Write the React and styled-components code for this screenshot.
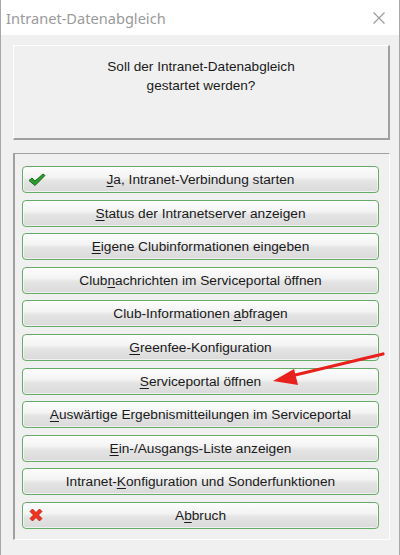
import React from "react";
import styled, { createGlobalStyle } from "styled-components";

const GlobalStyle = createGlobalStyle`
  html, body {
    margin: 0;
    padding: 0;
    background: #f0f0f0;
  }
`;

const Window = styled.div`
  position: relative;
  width: 400px;
  height: 555px;
  box-sizing: border-box;
  border-left: 1px solid #a8a8a8;
  border-right: 1px solid #a8a8a8;
  background: #f0f0f0;
  display: flex;
  flex-direction: column;
  overflow: hidden;
`;

const TitleBar = styled.div`
  height: 35px;
  flex: none;
  background: #ffffff;
  display: flex;
  align-items: center;
  justify-content: space-between;
  padding: 0 14px 0 5px;
  font-family: "Noto Sans", "Open Sans", sans-serif;
  font-size: 14.6px;
  color: #9a9a9a;
`;

const Body = styled.div`
  flex: 1;
  display: flex;
  flex-direction: column;
  gap: 13px;
  padding: 10px 9px 0 12px;
`;

const MessagePanel = styled.div`
  height: 95px;
  box-sizing: border-box;
  border-top: 1px solid #ffffff;
  border-left: 1px solid #ffffff;
  border-right: 2px solid #a0a0a0;
  border-bottom: 2px solid #a0a0a0;
  padding-top: 11px;
  text-align: center;
  font-family: "Liberation Sans", Arial, sans-serif;
  font-size: 13.6px;
  line-height: 19px;
  color: #1a1a1a;
`;

const GroupBox = styled.div`
  height: 387px;
  box-sizing: border-box;
  border-top: 1px solid #a0a0a0;
  border-left: 2px solid #a0a0a0;
  border-right: 1px solid #ffffff;
  border-bottom: 1px solid #ffffff;
  padding: 12px 10px 0 7px;
  display: flex;
  flex-direction: column;
  gap: 6.6px;
`;

const Button = styled.div`
  position: relative;
  height: 27px;
  box-sizing: border-box;
  border: 1px solid #66ab66;
  border-radius: 4px;
  background: linear-gradient(#fdfdfd 0%, #f3f3f3 42%, #e4e4e4 55%, #dadada 100%);
  box-shadow: inset 0 0 0 1px rgba(255, 255, 255, 0.6);
  display: flex;
  align-items: center;
  justify-content: center;
  font-family: "Liberation Sans", Arial, sans-serif;
  font-size: 13.7px;
  color: #1a1a1a;
`;

const Label = styled.span`
  white-space: pre;
`;

const Key = styled.span`
  text-decoration: underline;
  text-underline-offset: 2px;
`;

const IconSlot = styled.span`
  position: absolute;
  left: 5px;
  top: 50%;
  transform: translateY(-50%);
  display: flex;
`;

const ArrowLayer = styled.svg`
  position: absolute;
  left: 0;
  top: 0;
  pointer-events: none;
`;

const CheckIcon = () => (
  <svg width="18" height="14" viewBox="0 0 18 14">
    <path
      d="M1 7.5 L4 5 L7 8 L15 1 L17 2.5 L7 12.5 Z"
      fill="#2f9a2f"
      stroke="#1c6a1c"
      strokeWidth="1"
      strokeLinejoin="round"
    />
  </svg>
);

const CrossIcon = () => (
  <svg width="16" height="16" viewBox="0 0 16 16">
    <path
      d="M2 4.5 L4.5 2 L8 5.5 L11.5 2 L14 4.5 L10.5 8 L14 11.5 L11.5 14 L8 10.5 L4.5 14 L2 11.5 L5.5 8 Z"
      fill="#f0321e"
      stroke="#b8200f"
      strokeWidth="0.8"
      strokeLinejoin="round"
    />
  </svg>
);

const buttons = [
  { pre: "", key: "J", post: "a, Intranet-Verbindung starten", icon: "check" },
  { pre: "", key: "S", post: "tatus der Intranetserver anzeigen" },
  { pre: "", key: "E", post: "igene Clubinformationen eingeben" },
  { pre: "Club", key: "n", post: "achrichten im Serviceportal öffnen" },
  { pre: "Club-Informationen ", key: "a", post: "bfragen" },
  { pre: "", key: "G", post: "reenfee-Konfiguration" },
  { pre: "", key: "S", post: "erviceportal öffnen" },
  { pre: "", key: "A", post: "uswärtige Ergebnismitteilungen im Serviceportal" },
  { pre: "", key: "E", post: "in-/Ausgangs-Liste anzeigen" },
  { pre: "Intranet-", key: "K", post: "onfiguration und Sonderfunktionen" },
  { pre: "A", key: "b", post: "bruch", icon: "cross" },
];

const App = () => {
  return (
    <>
      <GlobalStyle />
      <Window>
        <TitleBar>
          <span>Intranet-Datenabgleich</span>
          <svg width="12" height="12" viewBox="0 0 12 12">
            <path d="M0.5 0.5 L11.5 11.5 M11.5 0.5 L0.5 11.5" stroke="#9a9a9a" strokeWidth="1.1" />
          </svg>
        </TitleBar>
        <Body>
          <MessagePanel>
            Soll der Intranet-Datenabgleich
            <br />
            gestartet werden?
          </MessagePanel>
          <GroupBox>
            {buttons.map((b, i) => (
              <Button key={i}>
                {b.icon && (
                  <IconSlot>{b.icon === "check" ? <CheckIcon /> : <CrossIcon />}</IconSlot>
                )}
                <Label>
                  {b.pre}
                  <Key>{b.key}</Key>
                  {b.post}
                </Label>
              </Button>
            ))}
          </GroupBox>
        </Body>
        <ArrowLayer width="400" height="555">
          <line x1="382" y1="354" x2="290" y2="376" stroke="#e8211c" strokeWidth="3.2" strokeLinecap="round" />
          <path d="M272 381 L293 369 L297 385 Z" fill="#e8211c" />
        </ArrowLayer>
      </Window>
    </>
  );
};

export default App;
